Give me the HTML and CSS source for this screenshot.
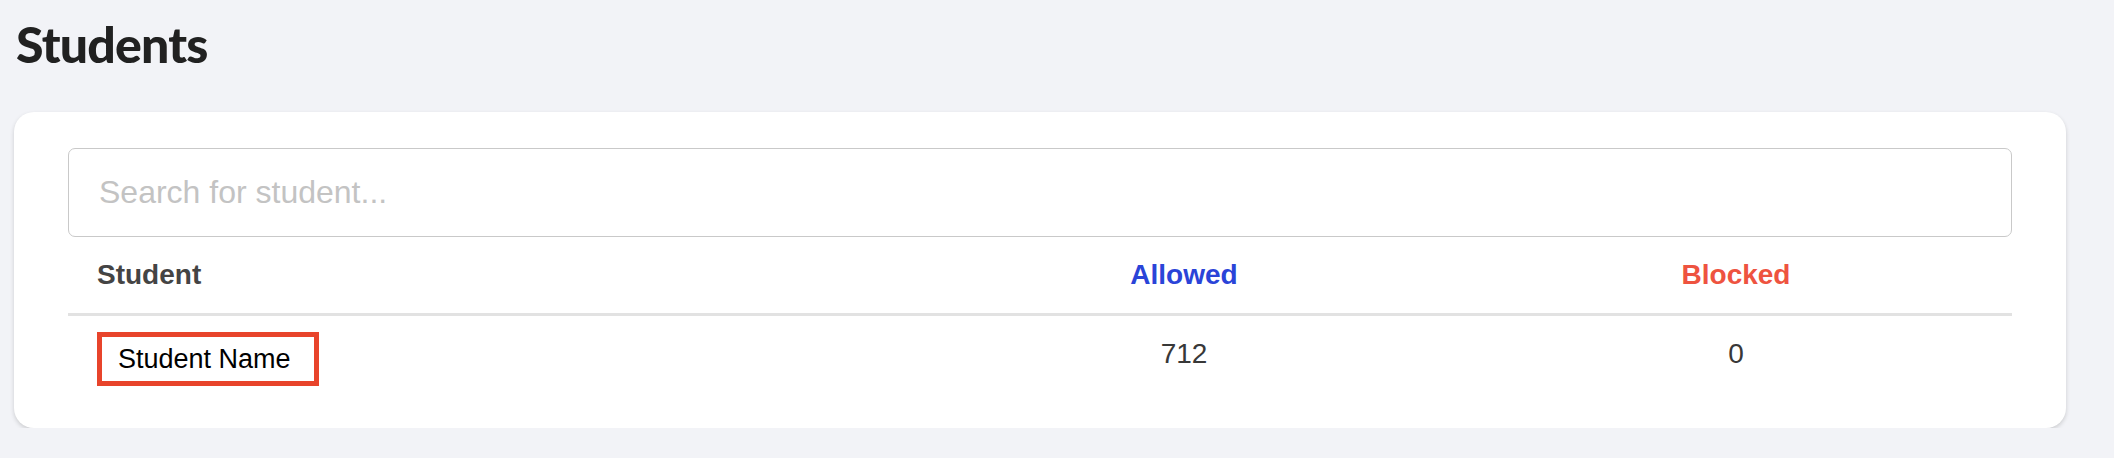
FILE: index.html
```html
<!DOCTYPE html>
<html lang="en">
<head>
  <meta charset="UTF-8" />
  <meta name="viewport" content="width=device-width, initial-scale=1.0" />
  <title>Students</title>
  <link rel="stylesheet" href="styles.css">
</head>
<body>
  <h1 class="page-title">Students</h1>

  <div class="card">
    <!-- Search -->
    <input class="search" type="text" placeholder="Search for student..." />

    <!-- Table -->
    <div class="students">
      <div class="row head">
        <div class="cell">Student</div>
        <div class="cell num allowed">Allowed</div>
        <div class="cell num blocked">Blocked</div>
      </div>
      <div class="row">
        <div class="cell"><span class="name-box">Student Name</span></div>
        <div class="cell num">712</div>
        <div class="cell num">0</div>
      </div>
    </div>
  </div>
</body>
</html>
```

FILE: styles.css
```css
body {
  margin: 0;
  padding: 19px 48px 0 14px;
  background-color: #f2f3f7;
  font-family: "Liberation Sans", Arial, sans-serif;
}

.page-title {
  margin: 0 0 43px 2px;
  font-family: Lato, "Noto Sans", sans-serif;
  font-weight: 900;
  font-size: 50px;
  line-height: 50px;
  letter-spacing: -0.8px;
  color: #212121;
}

.card {
  background-color: #fff;
  border-radius: 20px;
  padding: 36px 54px 26px;
  box-shadow: 0 2px 4px rgba(0, 0, 0, 0.16);
}

.search {
  display: block;
  box-sizing: border-box;
  width: 100%;
  height: 89px;
  padding: 0 30px;
  border: 1px solid #c9c9c9;
  border-radius: 7px;
  font-family: "Liberation Sans", Arial, sans-serif;
  font-size: 32px;
  color: #333;
  outline: none;
}

.search::placeholder {
  color: #c3c3c3;
}

.row {
  display: grid;
  grid-template-columns: 840fr 552fr 552fr;
  align-items: start;
  padding: 16px 0;
}

.row.head {
  border-bottom: 3px solid #e2e2e2;
  font-weight: bold;
  font-size: 28px;
  color: #444;
}

.cell {
  padding: 0 29px;
  line-height: 44px;
  font-size: 28px;
  color: #383838;
}

.head .cell {
  color: #444;
}

.num {
  text-align: center;
}

.head .allowed {
  color: #2a44d8;
}

.head .blocked {
  color: #ee5340;
}

.name-box {
  display: inline-block;
  padding: 0 23px 0 16px;
  border: 5px solid #e8442b;
  font-size: 27px;
  line-height: 44px;
  color: #000;
}
```
